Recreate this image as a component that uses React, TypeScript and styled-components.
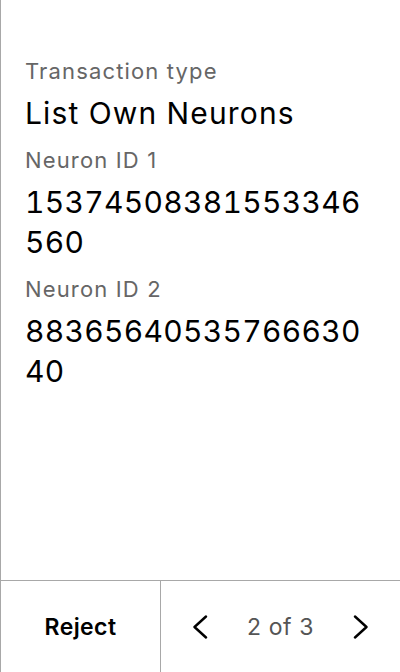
import React from "react";
import styled, { createGlobalStyle } from "styled-components";

const Global = createGlobalStyle`
  html, body { margin: 0; padding: 0; background: #fff; }
  body { font-family: Inter, "Noto Sans", sans-serif; }
  * { box-sizing: border-box; }
`;

const Screen = styled.div`
  width: 400px;
  height: 672px;
  display: flex;
  flex-direction: column;
  border-left: 1px solid #a8a8a8;
  background: #fff;
`;

const Content = styled.div`
  flex: 1;
  padding: 57px 20px 0 24px;
  display: flex;
  flex-direction: column;
`;

const Label = styled.div`
  font-size: 22px;
  line-height: 28px;
  letter-spacing: 1.15px;
  color: #666;
  margin-bottom: 8px;
`;

const Value = styled.div<{ $numeric?: boolean }>`
  font-size: 30px;
  line-height: 40px;
  letter-spacing: ${(p) => (p.$numeric ? "0.3px" : "1.15px")};
  font-variant-numeric: tabular-nums;
  color: #000;
  word-break: break-all;
  margin-bottom: 13px;
`;

const Footer = styled.div`
  height: 92px;
  border-top: 1px solid #a8a8a8;
  display: flex;
`;

const RejectButton = styled.button`
  width: 160px;
  border: none;
  border-right: 1px solid #a8a8a8;
  background: transparent;
  font-family: inherit;
  font-size: 23px;
  letter-spacing: 0.4px;
  font-weight: 600;
  color: #000;
  padding: 0;
`;

const Pager = styled.div`
  flex: 1;
  display: flex;
  align-items: center;
  justify-content: space-between;
  padding: 0 24px;
`;

const NavButton = styled.button`
  width: 30px;
  height: 40px;
  border: none;
  background: transparent;
  padding: 0;
  display: flex;
  align-items: center;
  justify-content: center;
`;

const PageText = styled.span`
  font-size: 23px;
  letter-spacing: 0.6px;
  color: #555;
`;

const Chevron = ({ dir }: { dir: "left" | "right" }) => (
  <svg width="16" height="24" viewBox="0 0 16 24" fill="none">
    <path
      d={dir === "left" ? "M14 1.5 L2.5 12 L14 22.5" : "M2 1.5 L13.5 12 L2 22.5"}
      stroke="#000"
      strokeWidth="2.4"
      strokeLinecap="round"
      strokeLinejoin="round"
    />
  </svg>
);

export default function App() {
  return (
    <>
      <Global />
      <Screen>
        <Content>
          <Label>Transaction type</Label>
          <Value>List Own Neurons</Value>
          <Label>Neuron ID 1</Label>
          <Value $numeric>15374508381553346560</Value>
          <Label>Neuron ID 2</Label>
          <Value $numeric>8836564053576663040</Value>
        </Content>
        <Footer>
          <RejectButton>Reject</RejectButton>
          <Pager>
            <NavButton aria-label="Previous">
              <Chevron dir="left" />
            </NavButton>
            <PageText>2 of 3</PageText>
            <NavButton aria-label="Next">
              <Chevron dir="right" />
            </NavButton>
          </Pager>
        </Footer>
      </Screen>
    </>
  );
}
